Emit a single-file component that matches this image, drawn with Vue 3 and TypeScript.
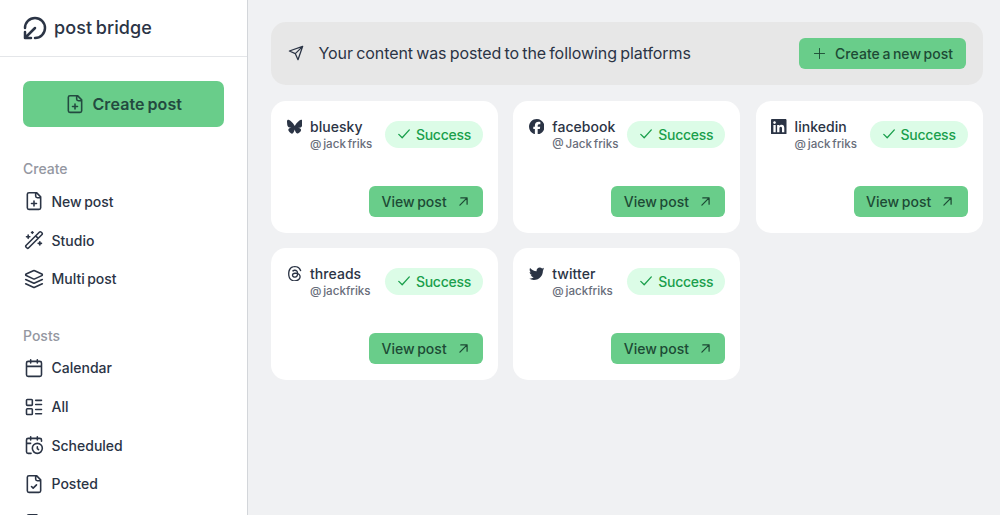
<template>
  <div class="app">
    <aside class="sidebar">
      <div class="brand">
        <svg class="logo" viewBox="0 0 24 24">
          <path d="M2 12a10 10 0 1 1 10 10M2 22 12 12M8 22H2v-6" />
        </svg>
        <span class="brand-name">post bridge</span>
      </div>

      <button class="create-btn">
        <svg class="icon" viewBox="0 0 24 24"><path :d="icons.filePlus" /></svg>
        <span>Create post</span>
      </button>

      <nav v-for="group in groups" :key="group.title" class="group">
        <h4 class="group-title">{{ group.title }}</h4>
        <a v-for="item in group.items" :key="item.label" class="nav-item">
          <svg class="icon" viewBox="0 0 24 24"><path :d="icons[item.icon]" /></svg>
          <span>{{ item.label }}</span>
        </a>
      </nav>
    </aside>

    <main class="main">
      <header class="banner">
        <svg class="send" viewBox="0 0 24 24"><path d="m22 2-7 20-4-9-9-4ZM22 2 11 13" /></svg>
        <p class="banner-text">Your content was posted to the following platforms</p>
        <button class="btn new-btn">
          <svg class="plus" viewBox="0 0 12 12"><path d="M6 .5v11M.5 6h11" /></svg>
          <span>Create a new post</span>
        </button>
      </header>

      <section class="cards">
        <article v-for="post in posts" :key="post.platform" class="card">
          <div class="card-top">
            <svg class="platform-icon" :viewBox="post.viewBox"><path :d="post.path" /></svg>
            <div class="account">
              <div class="platform">{{ post.platform }}</div>
              <div class="handle">{{ post.handle }}</div>
            </div>
            <span class="badge">
              <svg class="check" viewBox="0 0 12 10"><path d="m.8 5.4 3.4 3.4L11.3.9" /></svg>
              <span>Success</span>
            </span>
          </div>
          <button class="btn view-btn">
            <span>View post</span>
            <svg class="arrow" viewBox="0 0 10 10"><path d="M1 9 9 1M2 1h7v7" /></svg>
          </button>
        </article>
      </section>
    </main>
  </div>
</template>

<script setup lang="ts">
interface NavItem {
  label: string;
  icon: string;
}

interface Post {
  platform: string;
  handle: string;
  viewBox: string;
  path: string;
}

const file = "M15 2H6a2 2 0 0 0-2 2v16a2 2 0 0 0 2 2h12a2 2 0 0 0 2-2V7ZM14 2v4a2 2 0 0 0 2 2h4";

const icons: Record<string, string> = {
  file,
  filePlus: file + "M9 15h6M12 18v-6",
  fileCheck: file + "M9 15l2 2 4-4",
  wand: "m21.64 3.64-1.28-1.28a1.21 1.21 0 0 0-1.72 0L2.36 18.64a1.21 1.21 0 0 0 0 1.72l1.28 1.28a1.2 1.2 0 0 0 1.72 0L21.64 5.36a1.2 1.2 0 0 0 0-1.72M14 7l3 3M5 6v4M19 14v4M10 2v2M7 8H3M21 16h-4M11 3H9",
  layers:
    "m12.83 2.18a2 2 0 0 0-1.66 0L2.6 6.08a1 1 0 0 0 0 1.83l8.58 3.91a2 2 0 0 0 1.66 0l8.58-3.9a1 1 0 0 0 0-1.83ZM22 17.65l-9.17 4.16a2 2 0 0 1-1.66 0L2 17.65M22 12.65l-9.17 4.16a2 2 0 0 1-1.66 0L2 12.65",
  calendar:
    "M8 2v4M16 2v4M5 4h14a2 2 0 0 1 2 2v14a2 2 0 0 1-2 2H5a2 2 0 0 1-2-2V6a2 2 0 0 1 2-2ZM3 10h18",
  list: "M4 3h5a1 1 0 0 1 1 1v5a1 1 0 0 1-1 1H4a1 1 0 0 1-1-1V4a1 1 0 0 1 1-1ZM4 14h5a1 1 0 0 1 1 1v5a1 1 0 0 1-1 1H4a1 1 0 0 1-1-1v-5a1 1 0 0 1 1-1ZM14 4h7M14 9h7M14 15h7M14 20h7",
  calendarClock:
    "M21 7.5V6a2 2 0 0 0-2-2H5a2 2 0 0 0-2 2v14a2 2 0 0 0 2 2h3.5M16 2v4M8 2v4M3 10h5M17.5 17.5 16 16.3V14M22 16a6 6 0 1 1-12 0 6 6 0 0 1 12 0Z",
};

const groups: { title: string; items: NavItem[] }[] = [
  {
    title: "Create",
    items: [
      { label: "New post", icon: "filePlus" },
      { label: "Studio", icon: "wand" },
      { label: "Multi post", icon: "layers" },
    ],
  },
  {
    title: "Posts",
    items: [
      { label: "Calendar", icon: "calendar" },
      { label: "All", icon: "list" },
      { label: "Scheduled", icon: "calendarClock" },
      { label: "Posted", icon: "fileCheck" },
      { label: "", icon: "file" },
    ],
  },
];

const posts: Post[] = [
  {
    platform: "bluesky",
    handle: "@ jack friks",
    viewBox: "0 0 24 24",
    path: "M12 10.8c-1.087-2.114-4.046-6.053-6.798-7.995C2.566.944 1.561 1.266.902 1.565.139 1.908 0 3.08 0 3.768c0 .69.378 5.65.624 6.479.815 2.736 3.713 3.66 6.383 3.364.136-.02.275-.039.415-.056-.138.022-.276.04-.415.056-3.912.58-7.387 2.005-2.83 7.078 5.013 5.19 6.87-1.113 7.823-4.308.953 3.195 2.05 9.271 7.733 4.308 4.267-4.308 1.172-6.498-2.74-7.078a8.741 8.741 0 0 1-.415-.056c.14.017.279.036.415.056 2.67.297 5.568-.628 6.383-3.364.246-.828.624-5.79.624-6.478 0-.69-.139-1.861-.902-2.206-.659-.298-1.664-.62-4.3 1.24C16.046 4.748 13.087 8.687 12 10.8Z",
  },
  {
    platform: "facebook",
    handle: "@ Jack friks",
    viewBox: "0 0 512 512",
    path: "M512 256C512 114.6 397.4 0 256 0S0 114.6 0 256C0 376 82.7 476.8 194.2 504.5V334.2H141.4V256h52.8V222.3c0-87.1 39.4-127.5 125-127.5c16.2 0 44.2 3.2 55.7 6.4V172c-6-.6-16.5-1-29.6-1c-42 0-58.2 15.9-58.2 57.2V256h83.6l-14.4 78.2H286.7V510.1C413.8 494.8 512 386.9 512 256z",
  },
  {
    platform: "linkedin",
    handle: "@ jack friks",
    viewBox: "0 32 448 448",
    path: "M416 32H31.9C14.3 32 0 46.5 0 64.3v383.4C0 465.5 14.3 480 31.9 480H416c17.6 0 32-14.5 32-32.3V64.3c0-17.8-14.4-32.3-32-32.3zM135.4 416H69V202.2h66.5V416zm-33.2-243c-21.3 0-38.5-17.3-38.5-38.5S80.9 96 102.2 96c21.2 0 38.5 17.3 38.5 38.5 0 21.3-17.2 38.5-38.5 38.5zm282.1 243h-66.4V312c0-24.8-.5-56.7-34.5-56.7-34.6 0-39.9 27-39.9 54.9V416h-66.4V202.2h63.7v29.2h.9c8.9-16.8 30.6-34.5 62.9-34.5 67.2 0 79.7 44.3 79.7 101.9V416z",
  },
  {
    platform: "threads",
    handle: "@ jackfriks",
    viewBox: "-16 16 480 480",
    path: "M331.5 235.7c2.2 .9 4.2 1.9 6.3 2.8c29.2 14.1 50.6 35.2 61.8 61.4c15.7 36.5 17.2 95.8-30.3 143.2c-36.2 36.2-80.3 52.5-142.6 53h-.3c-70.2-.5-124.1-24.1-160.4-70.2c-32.3-41-48.9-98.1-49.5-169.6V256v-.2C17 184.3 33.6 127.2 65.9 86.2C102.2 40.1 156.2 16.5 226.4 16h.3c70.3 .5 124.9 24 162.3 69.9c18.4 22.7 32 50 40.6 81.7l-40.4 10.8c-7.1-25.8-17.8-47.8-32.2-65.4c-29.2-35.8-73-54.2-130.5-54.6c-57 .5-100.1 18.8-128.2 54.4C72.1 146.1 58.5 194.3 58 256c.5 61.7 14.1 109.9 40.3 143.3c28 35.6 71.2 53.9 128.2 54.4c51.4-.4 85.4-12.6 113.7-40.9c32.3-32.2 31.7-71.8 21.4-95.9c-6.1-14.2-17.1-26-31.9-34.9c-3.7 26.9-11.8 48.3-24.7 64.8c-17.1 21.8-41.4 33.6-72.7 35.3c-23.6 1.3-46.3-4.4-63.9-16c-20.8-13.8-33-34.8-34.3-59.3c-2.5-48.3 35.7-83 95.2-86.4c21.1-1.2 40.9-.3 59.2 2.8c-2.4-14.8-7.3-26.6-14.6-35.2c-10-11.7-25.6-17.7-46.2-17.8H227c-16.6 0-39 4.6-53.3 26.3l-34.4-23.6c19.2-29.1 50.3-45.1 87.8-45.1h.8c62.6 .4 99.9 39.5 103.7 107.7l-.2 .2zm-156 68.8c1.3 25.1 28.4 36.8 54.6 35.3c25.6-1.4 54.6-11.4 59.5-73.2c-13.2-2.9-27.8-4.4-43.4-4.4c-4.8 0-9.6 .1-14.4 .4c-42.9 2.4-57.2 23.2-56.2 41.8l-.1 .1z",
  },
  {
    platform: "twitter",
    handle: "@ jackfriks",
    viewBox: "0 0 512 512",
    path: "M459.37 151.716c.325 4.548.325 9.097.325 13.645 0 138.72-105.583 298.558-298.558 298.558-59.452 0-114.68-17.219-161.137-47.106 8.447.974 16.568 1.299 25.34 1.299 49.055 0 94.213-16.568 130.274-44.832-46.132-.975-84.792-31.188-98.112-72.772 6.498.974 12.995 1.624 19.818 1.624 9.421 0 18.843-1.3 27.614-3.573-48.081-9.747-84.143-51.98-84.143-102.985v-1.299c13.969 7.797 30.214 12.67 47.431 13.319-28.264-18.843-46.781-51.005-46.781-87.391 0-19.492 5.197-37.36 14.294-52.954 51.655 63.675 129.3 105.258 216.365 109.807-1.624-7.797-2.599-15.918-2.599-24.04 0-57.828 46.782-104.934 104.934-104.934 30.213 0 57.502 12.67 76.67 33.137 23.715-4.548 46.456-13.32 66.599-25.34-7.798 24.366-24.366 44.833-46.132 57.827 21.117-2.273 41.584-8.122 60.426-16.243-14.292 20.791-32.161 39.308-52.628 54.253z",
  },
];
</script>

<style>
body {
  margin: 0;
  overflow: hidden;
}
</style>

<style scoped>
.app {
  display: flex;
  width: 1000px;
  height: 515px;
  overflow: hidden;
  background: #f0f1f3;
  color: #2b3445;
  font-family: Inter, "Liberation Sans", sans-serif;
  word-spacing: -0.08em;
}

button {
  display: flex;
  align-items: center;
  border: none;
  padding: 0;
  font-family: inherit;
  word-spacing: inherit;
  white-space: nowrap;
  cursor: pointer;
  background: #69cd8a;
}

svg {
  flex: none;
  fill: none;
  stroke: currentColor;
  stroke-linecap: round;
  stroke-linejoin: round;
}

.sidebar {
  flex: none;
  box-sizing: border-box;
  width: 248px;
  height: 515px;
  overflow: hidden;
  background: #fff;
  border-right: 1px solid #d3d6da;
}

.brand {
  display: flex;
  align-items: center;
  gap: 7px;
  box-sizing: border-box;
  height: 57px;
  padding: 0 0 1px 23px;
  border-bottom: 1px solid #e4e6e9;
}

.logo {
  width: 24px;
  height: 24px;
  stroke-width: 2.5;
}

.brand-name {
  font-size: 18px;
  font-weight: 500;
  letter-spacing: 0.08px;
}

.create-btn {
  justify-content: center;
  gap: 7.5px;
  width: 201px;
  height: 46px;
  margin: 24px 0 0 23px;
  border-radius: 7px;
  color: #234a40;
  font-size: 16px;
  font-weight: 600;
  letter-spacing: 0.1px;
}

.icon {
  width: 20px;
  height: 20px;
  stroke-width: 1.9;
}

.group {
  padding: 32px 0 0 23px;
}

.group + .group {
  padding-top: 27.5px;
}

.group-title {
  height: 20px;
  margin: 0 0 3px;
  color: #9497a1;
  font-size: 14px;
  font-weight: 500;
  line-height: 20px;
}

.nav-item {
  display: flex;
  align-items: center;
  gap: 7.5px;
  height: 38.7px;
  padding-left: 1px;
  font-size: 14px;
  font-weight: 500;
  letter-spacing: 0;
}

.main {
  flex: 1;
  padding: 21.5px 17.5px 0 23px;
}

.banner {
  display: flex;
  align-items: center;
  height: 63.5px;
  padding: 0 16.5px;
  border-radius: 15px;
  background: #e7e7e7;
}

.send {
  width: 16px;
  height: 16px;
  stroke-width: 1.9;
}

.banner-text {
  flex: 1;
  margin: 0 0 0 15px;
  font-size: 16px;
  letter-spacing: -0.06px;
}

.btn {
  height: 31px;
  border-radius: 6px;
  color: #1d4a35;
  font-size: 14px;
  font-weight: 500;
  letter-spacing: 0.05px;
}

.new-btn {
  gap: 10px;
  width: 167px;
  padding-left: 15px;
}

.plus {
  width: 11px;
  height: 11px;
}

.cards {
  display: grid;
  grid-template-columns: repeat(3, 1fr);
  gap: 15.4px;
  margin-top: 16px;
}

.card {
  display: flex;
  flex-direction: column;
  justify-content: space-between;
  box-sizing: border-box;
  height: 132px;
  padding: 16px 15px 16px 15.5px;
  border-radius: 15px;
  background: #fff;
}

.card-top {
  display: flex;
}

.platform-icon {
  width: 15.5px;
  height: 15.5px;
  margin-top: 1.5px;
  fill: currentColor;
  stroke: none;
}

.account {
  flex: 1;
  margin-left: 8px;
  white-space: nowrap;
}

.platform {
  height: 18px;
  font-size: 14px;
  font-weight: 500;
  letter-spacing: 0.05px;
  line-height: 20px;
}

.handle {
  color: #686d7a;
  font-size: 11.6px;
  font-weight: 500;
  line-height: 18px;
}

.badge {
  display: flex;
  align-items: center;
  box-sizing: border-box;
  gap: 6px;
  width: 98px;
  height: 27px;
  margin-top: 3.5px;
  padding-left: 13px;
  border-radius: 14px;
  background: #dcfce7;
  color: #1a9f4c;
  font-size: 14px;
  font-weight: 500;
  letter-spacing: -0.25px;
}

.check {
  width: 12px;
  height: 10px;
  stroke-width: 1.3;
}

.view-btn {
  align-self: flex-end;
  gap: 12px;
  width: 114px;
  padding-left: 12.5px;
}

.arrow {
  width: 9px;
  height: 9px;
  stroke-width: 1.4;
}
</style>
